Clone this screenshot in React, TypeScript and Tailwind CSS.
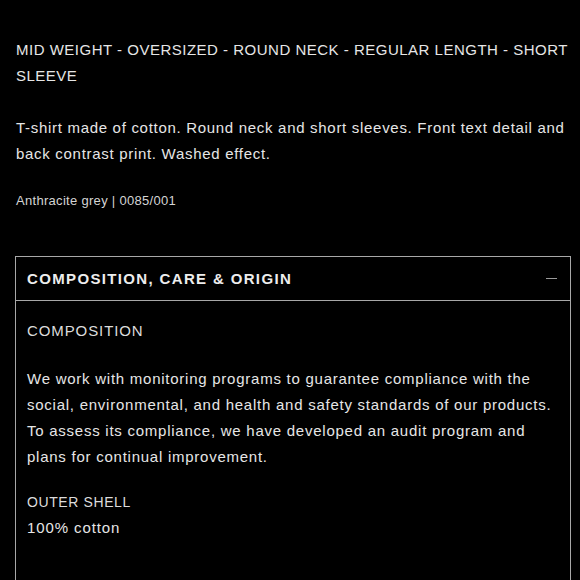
import React from "react";

export default function App() {
  const font = { fontFamily: '"Liberation Sans", Arial, Helvetica, sans-serif' };
  return (
    <div
      className="min-h-[580px] w-[580px] overflow-hidden bg-black text-[#e6e6e6]"
      style={font}
    >
      <div className="pl-[16px] pr-[9px] pt-[37px]">
        <p className="text-[15px] leading-[26px] tracking-[0.5px]">
          MID WEIGHT - OVERSIZED - ROUND NECK - REGULAR LENGTH - SHORT SLEEVE
        </p>
        <p className="mt-[26px] text-[15px] leading-[26px] tracking-[0.7px]">
          T-shirt made of cotton. Round neck and short sleeves. Front text detail and back contrast
          print. Washed effect.
        </p>
        <p className="mt-[24px] text-[13px] leading-[20px] tracking-[0.3px] text-[#d4d4d4]">
          Anthracite grey | 0085/001
        </p>
      </div>

      <div className="ml-[15px] mr-[9px] mt-[45px] border border-b-0 border-[#a8a8a8]">
        <div className="flex h-[44px] items-center justify-between border-b border-[#a8a8a8] pl-[11px] pr-[13px]">
          <span className="text-[15px] font-bold leading-[20px] tracking-[1.35px] text-[#ededed]">
            COMPOSITION, CARE &amp; ORIGIN
          </span>
          <span className="block h-px w-[11px] bg-[#9a9a9a]" />
        </div>
        <div className="pb-[60px] pl-[11px] pr-[11px] pt-[17px]">
          <p className="text-[15px] leading-[26px] tracking-[0.9px] text-[#dcdcdc]">COMPOSITION</p>
          <p className="mt-[22px] text-[15px] leading-[26px] tracking-[0.75px]">
            We work with monitoring programs to guarantee compliance with the social,
            environmental, and health and safety standards of our products. To assess its
            compliance, we have developed an audit program and plans for continual improvement.
          </p>
          <p className="mt-[19px] text-[14px] leading-[26px] tracking-[0.6px] text-[#dcdcdc]">
            OUTER SHELL
          </p>
          <p className="text-[15px] leading-[26px] tracking-[0.9px]">100% cotton</p>
        </div>
      </div>
    </div>
  );
}
